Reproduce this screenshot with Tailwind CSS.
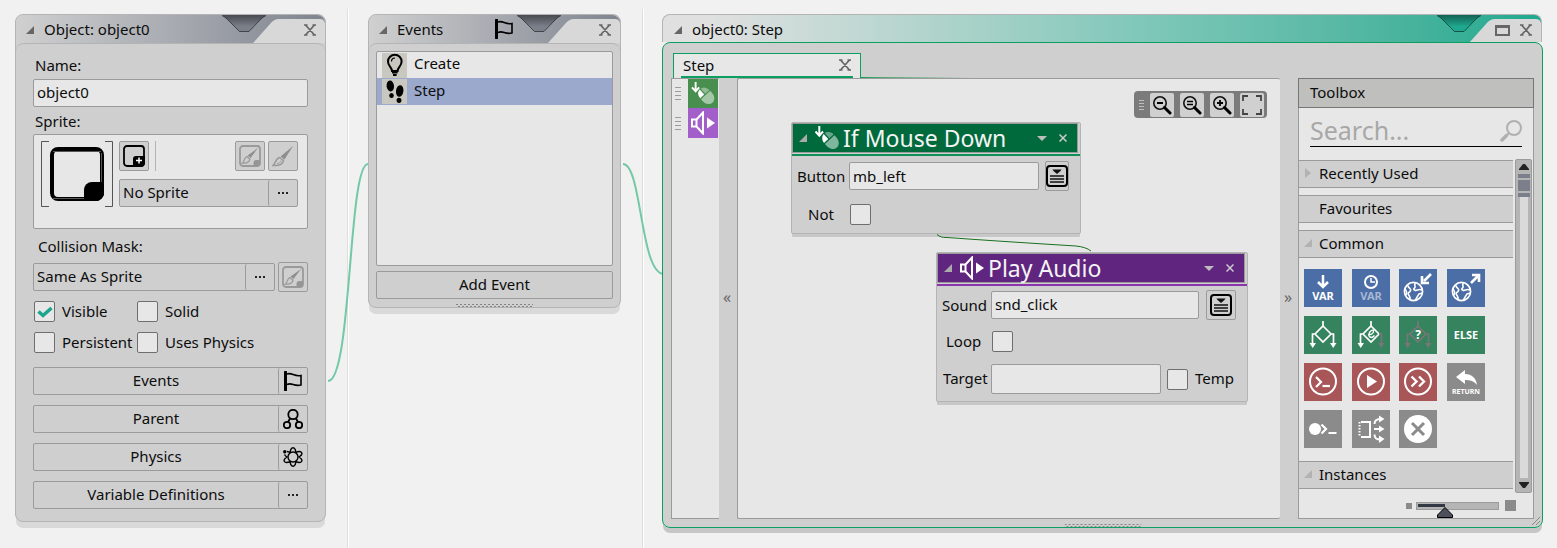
<!DOCTYPE html>
<html lang="en">
<head>
<meta charset="utf-8">
<title>Object editor</title>
<script src="https://cdn.jsdelivr.net/npm/@tailwindcss/browser@4"></script>
</head>
<body class="min-h-screen bg-[#f1f1f1] font-['Noto_Sans',sans-serif] text-[15px] leading-[22px] text-[#0c0c0c]">

<svg class="absolute size-0" aria-hidden="true">
  <defs>
    <linearGradient id="shade" x1="0" y1="0" x2="0" y2="1"><stop offset="0" stop-color="#000" stop-opacity=".42"/><stop offset=".7" stop-color="#000" stop-opacity="0"/></linearGradient>
    <pattern id="dots" width="4" height="4" patternUnits="userSpaceOnUse"><path d="M0 0h2v1H0zM2 2h2v1H2z" fill="#858585"/></pattern>
  </defs>
  <symbol id="flag" viewBox="0 0 20 20"><path d="M2.500 1v18" stroke="#000" stroke-width="3" stroke-linecap="round" fill="none"/><path d="M4 3c5-2 7 3 14 1.500v9.500c-7 2-9-3-14-.5" stroke="#000" stroke-width="1.600" fill="none"/></symbol>
  <symbol id="tri" viewBox="0 0 8 8"><path d="M8 0v8H0z" fill="currentColor"/></symbol>
  <symbol id="close" viewBox="0 0 12 12"><path d="M0 1h3.500M8.500 1H12M0 11h3.500M8.500 11H12M1.500 1l9 10M10.500 1l-9 10" stroke="currentColor" stroke-width="1.700" fill="none"/></symbol>
  <symbol id="more" viewBox="0 0 10 2"><path d="M0 0h2v2H0zM4 0h2v2H4zM8 0h2v2H8z" fill="#222"/></symbol>
  <symbol id="brush" viewBox="0 0 22 22"><path d="M21 1 12.500 14.500 8.500 11.500z" fill="#8f8f8f"/><path d="M7.500 12.500 11.500 15.500C10.500 20 6 21 1 20.500 3.500 19 3 14 7.500 12.500z" fill="none" stroke="#9a9a9a" stroke-width="1.500"/><path d="M5 18.500c2 0 3.500-1 4-3" stroke="#9a9a9a" fill="none"/></symbol>
  <symbol id="editsprite" viewBox="0 0 22 22"><rect x="1" y="1" width="20" height="20" rx="3" fill="none" stroke="#9a9a9a" stroke-width="1.800"/><path d="M14.500 21v-3a3 3 0 0 1 3-3H21v3.500L18.500 21z" fill="#959595"/><path d="M19 3 11.500 13 8.500 10.500z" fill="#8f8f8f"/><path d="M7.800 11.500 11 14.200C10 18 7 18.500 3.500 18 5.500 17 5 12.500 7.800 11.500z" fill="none" stroke="#9a9a9a" stroke-width="1.300"/></symbol>
  <symbol id="notch" viewBox="0 0 44 18"><path d="M0 0H44L40 3 27 16.500H17.500L4 3z" fill="currentColor"/><path d="M0 0H44L40 3 27 16.500H17.500L4 3z" fill="url(#shade)"/><path d="M0 .5 4 3 17.500 16.500H27L40 3 44 .5" fill="none" stroke="#000" stroke-opacity=".5"/></symbol>
  <symbol id="menu" viewBox="0 0 22 22"><rect x="1" y="1" width="20" height="20" rx="3" fill="none" stroke="#000" stroke-width="2"/><path d="M6.500 4.500h9l-1 1.500-3.500 3-3.500-3z" fill="#111"/><path d="M4 11h14M4 14h14M4 17h14" stroke="#111" stroke-width="1.600"/></symbol>
  <symbol id="mouse" viewBox="0 0 24 24"><path d="M4.300 0v9M.5 5.500l3.800 4.200L8 5.500" stroke="#fff" stroke-width="2" fill="none"/><g transform="rotate(-42 15.500 14.500)"><path d="M9 12a6.500 7.500 0 0 1 5.800-7v7z" fill="#fff"/><path d="M16.200 5a6.500 7.500 0 0 1 5.800 7h-5.800z" fill="#fff" fill-opacity=".4"/><path d="M9 13.300h13v3.200a6.500 7.500 0 0 1-13 0z" fill="#fff" fill-opacity=".5"/></g></symbol>
  <symbol id="audio" viewBox="0 0 24 24"><path d="M1 8.500h4.500v7H1zM5.500 8.500 12 1.500v21L5.500 15.500z" fill="none" stroke="#fff" stroke-width="2"/><path d="M16 6.500 24 12 16 17.500z" fill="#fff"/></symbol>
  <symbol id="lens" viewBox="0 0 20 20"><circle cx="8" cy="8" r="6.200" fill="none" stroke="#111" stroke-width="1.600"/><path d="M12.500 12.500 18 18" stroke="#000" stroke-width="3" stroke-linecap="round"/></symbol>
  <symbol id="globe" viewBox="0 0 22 22"><circle cx="11" cy="11" r="9.500" fill="none" stroke="#fff" stroke-width="1.800"/><path d="M5 4.500c0 3 4 3 3 5.500s-3 1-2.500 3.500 3 3 1.500 5.500M2 9c2 1 2 4 1 6M13 2c-2 2 1 4-1 5.500s1 3 3 2 3-1 5 0M20 13c-3 0-3 0-4.500 2.500S14 18 13 20" fill="none" stroke="#fff" stroke-width="1.700"/></symbol>
</svg>

<main class="relative flex min-h-screen min-w-[1200px] items-start pt-[14px] pr-[14px] pl-[15px]">

  <i class="absolute top-[9px] bottom-0 left-[347px] w-[2px] border-l border-[#dedede] bg-white"></i>
  <i class="absolute top-[9px] bottom-0 left-[642px] w-[2px] border-l border-[#dedede] bg-white"></i>
  <svg class="absolute top-0 left-[326px]" width="340" height="400" fill="none" stroke="#73c9a6" stroke-width="2" aria-hidden="true">
    <path d="M2 381C26 381 22 164 42 164"/>
    <path d="M297 164C316 164 314 274 338 274"/>
  </svg>

  <!-- Object window -->
  <section class="relative w-[311px] shrink-0 rounded-lg border border-[#b4b4b4] bg-[#cfcfcf] shadow-[0_7px_0_-1px_#d9d9d9]">
    <header class="relative flex h-7 items-center overflow-hidden rounded-t-lg bg-linear-to-r from-[#d0d0d0] via-[#a8abb1] to-[#7f848e] pl-2.5">
      <svg class="mt-0.5 size-2 text-[#666]"><use href="#tri"/></svg>
      <h1 class="ml-2.5">Object: object0</h1>
      <svg class="absolute top-0 right-[59px] h-[18px] w-11 text-[#7b7f89]"><use href="#notch"/></svg>
      <svg class="absolute right-0 bottom-0 h-6 w-[72px]"><path d="M0 24 17 5Q21 0 26 0H67Q71 0 72 4V24z" fill="#d8d8d8"/></svg>
      <button class="absolute top-[9px] right-[9px] text-[#666]" aria-label="Close"><svg class="size-3"><use href="#close"/></svg></button>
    </header>
    <div class="rounded-t-lg border-t border-[#b4b4b4] px-[17px] pt-2.5 pb-3">
      <label for="name" class="ml-0.5 block">Name:</label>
      <input id="name" value="object0" class="mt-[3px] block h-7 w-full rounded-xs border border-[#9b9b9b] bg-[#e7e7e7] px-[3px] pb-0.5">
      <div class="mt-[3px] ml-0.5">Sprite:</div>
      <div class="mt-0.5 flex h-[95px] gap-1.5 rounded-xs border border-[#9b9b9b] bg-[#e7e7e7] pt-1.5 pr-[9px] pl-[7px]">
        <svg class="h-[66px] w-[72px] shrink-0" viewBox="0 0 72 66" aria-label="Sprite preview"><path d="M8 .5H.5v65H8M64 .5h7.500v65H64" fill="none" stroke="#555"/><rect x="11" y="8" width="50" height="50" rx="6" fill="none" stroke="#000" stroke-width="4"/><path d="M12 10.500h48M60.500 12v30M12 57.500h32" stroke="#555"/><path d="M43 60V49a8 8 0 0 1 8-8H63v13l-6 6z" fill="#000"/></svg>
        <div class="flex min-w-0 flex-1 flex-col gap-2">
          <div class="flex gap-[3px]">
            <button aria-label="New sprite" class="grid size-[30px] place-items-center rounded-xs border border-[#9b9b9b] bg-[#cfcfcf]"><svg class="size-[22px]" viewBox="0 0 22 22"><rect x="1" y="1" width="20" height="20" rx="3" fill="none" stroke="#000" stroke-width="1.800"/><path d="M10 22v-8a3 3 0 0 1 3-3h9v8l-3 3z"/><path d="M16 12.500v6M13 15.500h6" stroke="#fff" stroke-width="1.500"/></svg></button>
            <i class="ml-[3px] w-px bg-[#b4b4b4]"></i>
            <button aria-label="Edit sprite" class="ml-auto grid size-[30px] place-items-center rounded-xs border border-[#9b9b9b] bg-[#cfcfcf]"><svg class="size-[22px]"><use href="#editsprite"/></svg></button>
            <button aria-label="Edit image" class="grid size-[30px] place-items-center rounded-xs border border-[#9b9b9b] bg-[#cfcfcf]"><svg class="size-[22px]"><use href="#brush"/></svg></button>
          </div>
          <div class="flex h-7 rounded-xs border border-[#9b9b9b] bg-[#cfcfcf]">
            <button class="flex-1 pb-0.5 pl-[3px] text-left">No Sprite</button>
            <button class="grid w-[29px] place-items-center rounded-l-xs border-l border-[#9b9b9b]" aria-label="Choose sprite"><svg class="h-0.5 w-2.5"><use href="#more"/></svg></button>
          </div>
        </div>
      </div>
      <div class="mt-1.5 ml-[5px]">Collision Mask:</div>
      <div class="mt-[5px] flex items-center gap-[3px]">
        <div class="flex h-7 flex-1 rounded-xs border border-[#9b9b9b]">
          <button class="flex-1 pb-0.5 pl-[3px] text-left">Same As Sprite</button>
          <button class="grid w-[29px] place-items-center rounded-l-xs border-l border-[#9b9b9b]" aria-label="Choose mask"><svg class="h-0.5 w-2.5"><use href="#more"/></svg></button>
        </div>
        <button aria-label="Edit mask" class="grid size-[30px] place-items-center rounded-xs border border-[#9b9b9b]"><svg class="size-[22px]"><use href="#editsprite"/></svg></button>
      </div>
      <div class="mt-[9px] grid grid-cols-[103px_1fr] gap-y-2.5 pl-px whitespace-nowrap">
        <label class="flex h-[21px] items-center gap-[7px]"><span class="relative size-[21px]"><input type="checkbox" checked class="block size-[21px] appearance-none rounded-xs border border-[#6f6f6f] bg-[#e7e7e7]"><svg class="absolute top-1 left-[3px] h-3.5 w-4" viewBox="0 0 16 14"><path d="M1.500 6.500 6 10.500 14.500 3" fill="none" stroke="#1aa58d" stroke-width="3.500"/></svg></span><span class="pb-0.5">Visible</span></label>
        <label class="flex h-[21px] items-center gap-[7px]"><input type="checkbox" class="size-[21px] appearance-none rounded-xs border border-[#6f6f6f] bg-[#e7e7e7]"><span class="pb-0.5">Solid</span></label>
        <label class="flex h-[21px] items-center gap-[7px]"><input type="checkbox" class="size-[21px] appearance-none rounded-xs border border-[#6f6f6f] bg-[#e7e7e7]"><span class="pb-0.5">Persistent</span></label>
        <label class="flex h-[21px] items-center gap-[7px]"><input type="checkbox" class="size-[21px] appearance-none rounded-xs border border-[#6f6f6f] bg-[#e7e7e7]"><span class="pb-0.5">Uses Physics</span></label>
      </div>
      <div class="mt-3.5 flex flex-col gap-2.5">
        <div class="flex h-7 rounded-xs border border-[#9b9b9b]"><button class="flex-1 pb-0.5">Events</button><button aria-label="Open events" class="grid w-[29px] place-items-center rounded-l-xs border-l border-[#9b9b9b]"><svg class="size-5"><use href="#flag"/></svg></button></div>
        <div class="flex h-7 rounded-xs border border-[#9b9b9b]"><button class="flex-1 pb-0.5">Parent</button><button aria-label="Open parent" class="grid w-[29px] place-items-center rounded-l-xs border-l border-[#9b9b9b]"><svg class="size-5" viewBox="0 0 20 20" fill="none" stroke="#000" stroke-width="1.800"><circle cx="10" cy="5.500" r="4.700"/><circle cx="4" cy="16" r="3.200"/><circle cx="16" cy="16" r="3.200"/><path d="M7 9.500 5 13M13 9.500 15 13"/></svg></button></div>
        <div class="flex h-7 rounded-xs border border-[#9b9b9b]"><button class="flex-1 pb-0.5">Physics</button><button aria-label="Open physics" class="grid w-[29px] place-items-center rounded-l-xs border-l border-[#9b9b9b]"><svg class="size-5" viewBox="0 0 20 20" fill="none" stroke="#000" stroke-width="1.400"><path d="M7.500 5.500C7 2.500 8.500 .8 10 .8s3 1.700 2.500 4.700M7.500 14.500c-.5 3 1 4.700 2.500 4.700s3-1.700 2.500-4.700M12.500 5.500c3-1.300 5.500-1.200 6.200.2s-.5 3-2.700 4.300c2.200 1.300 3.400 2.900 2.700 4.300s-3.200 1.500-6.200.2M7.500 14.500c-3 1.300-5.500 1.200-6.200-.2S1.800 11.300 4 10C2.800 9.300 2 8.500 1.500 7.500M7.500 5.500C6 5 5 4.500 4 4.500"/><circle cx="10" cy="10" r="5"/><circle cx="1.800" cy="4.800" r="1" fill="#000"/></svg></button></div>
        <div class="flex h-7 rounded-xs border border-[#9b9b9b]"><button class="flex-1 pb-0.5">Variable Definitions</button><button aria-label="Open variable definitions" class="grid w-[29px] place-items-center rounded-l-xs border-l border-[#9b9b9b]"><svg class="h-0.5 w-2.5"><use href="#more"/></svg></button></div>
      </div>
    </div>
  </section>

  <!-- Events window -->
  <section class="relative ml-[42px] w-[253px] shrink-0 rounded-lg border border-[#b4b4b4] bg-[#cfcfcf] shadow-[0_7px_0_-1px_#d9d9d9]">
    <header class="relative flex h-7 items-center overflow-hidden rounded-t-lg bg-linear-to-r from-[#d0d0d0] via-[#a8abb1] to-[#7f848e] pl-2.5">
      <svg class="mt-0.5 size-2 text-[#666]"><use href="#tri"/></svg>
      <h2 class="ml-2.5">Events</h2>
      <svg class="ml-[51px] size-5"><use href="#flag"/></svg>
      <svg class="absolute top-0 right-[59px] h-[18px] w-11 text-[#7b7f89]"><use href="#notch"/></svg>
      <svg class="absolute right-0 bottom-0 h-6 w-[72px]"><path d="M0 24 17 5Q21 0 26 0H67Q71 0 72 4V24z" fill="#d8d8d8"/></svg>
      <button class="absolute top-[9px] right-[9px] text-[#666]" aria-label="Close"><svg class="size-3"><use href="#close"/></svg></button>
    </header>
    <div class="rounded-t-lg border-t border-[#b4b4b4] px-[7px] pt-[7px] pb-1">
      <ul class="h-[215px] rounded-xs border border-[#9b9b9b] bg-[#e7e7e7]">
        <li class="flex h-[26px] items-center gap-[7px] pl-[5px]"><svg class="size-[25px] bg-[#c8c7c0]" viewBox="0 0 25 25" fill="none" stroke="#000"><path d="M10 18c0-4-4-4.500-4-9.500a6.800 6.800 0 0 1 13.600 0c0 5-4 5.500-4 9.500z" stroke-width="2"/><path d="M9.500 8.500c0-2.500 1.500-3.500 3.500-3.500" stroke-width="1.200"/><path d="M10 19.500h5.600M11 22h3.600" stroke-width="2"/></svg><span class="pb-1">Create</span></li>
        <li class="flex h-[27px] items-center gap-[7px] bg-[#9ba9cc] pl-[5px]"><svg class="size-[25px] bg-[#c8c7c0]" viewBox="0 0 25 25"><ellipse cx="8.300" cy="7" rx="3.700" ry="5.500" transform="rotate(-5 8.300 7)"/><ellipse cx="9.500" cy="16.500" rx="2.300" ry="2.500"/><ellipse cx="17.700" cy="12" rx="3.700" ry="5.800" transform="rotate(8 17.700 12)"/><ellipse cx="17" cy="21.300" rx="2.400" ry="2.600"/></svg><span class="pb-[3px]">Step</span></li>
      </ul>
      <button class="mt-[5px] h-7 w-full rounded-xs border border-[#9b9b9b] pb-0.5">Add Event</button>
      <svg class="mx-auto mt-[5px] -mb-1 block h-[3px] w-[77px]"><rect width="100%" height="100%" fill="url(#dots)"/></svg>
    </div>
  </section>

  <!-- Code window -->
  <section class="relative ml-[41px] min-w-0 flex-1 rounded-lg shadow-[0_6px_0_-1px_#c6c6c6]">
    <header class="relative mr-px flex h-7 items-center overflow-hidden rounded-t-lg border-x border-t border-[#b4b4b4] bg-linear-to-r from-[#e0e0e0] from-5% via-[#7ec7b9] via-55% to-[#1ba98f] pl-[11px]">
      <svg class="mt-[3px] size-2 text-[#666]"><use href="#tri"/></svg>
      <h2 class="mt-px ml-2.5">object0: Step</h2>
      <svg class="absolute top-0 right-[60px] h-[18px] w-11 text-[#1fa88f]"><use href="#notch"/></svg>
      <svg class="absolute right-0 bottom-0 h-[23px] w-[72px]"><path d="M0 24 17 5Q21 0 26 0H67Q71 0 72 4V24z" fill="#d8d8d8"/></svg>
      <button class="absolute top-[10px] right-[31px] h-[11px] w-[15px] border-2 border-t-3 border-[#666]" aria-label="Maximise"></button>
      <button class="absolute top-[9px] right-[9px] text-[#666]" aria-label="Close"><svg class="size-3"><use href="#close"/></svg></button>
    </header>
    <div class="relative rounded-lg border border-[#0d9f62] bg-[#cfcfcf] px-2 pt-2.5 pb-2">
      <div class="ml-0.5 flex h-[25px] w-[188px] items-center justify-between border border-b-0 border-[#0d9f62] bg-[#e7e7e7] pr-[9px] pb-[3px] pl-[9px]" role="tab">
        <span>Step</span>
        <button class="text-[#666]" aria-label="Close tab"><svg class="size-3"><use href="#close"/></svg></button>
      </div>
      <div class="-mt-0.5 flex h-0.5 items-end">
        <i class="ml-2.5 h-0.5 w-[172px] bg-[#0d9f62]"></i>
        <i class="ml-2 h-px w-[110px] bg-linear-to-r from-[#0d9f62] to-[#cfcfcf]"></i>
      </div>
      <div class="flex h-[441px]">
        <div class="w-12 shrink-0 border border-r-0 border-[#9b9b9b] bg-[#e7e7e7]">
          <div class="flex h-[29px] items-center"><span class="mr-[7px] ml-[3px] h-[13px] w-1.5 bg-[repeating-linear-gradient(#9b9b9b_0_1px,transparent_1px_4px)]"></span><svg class="h-full w-[30px] bg-[#488e4e] p-[3px]"><use href="#mouse"/></svg></div>
          <div class="flex h-[30px] items-center"><span class="mr-[7px] ml-[3px] h-[13px] w-1.5 bg-[repeating-linear-gradient(#9b9b9b_0_1px,transparent_1px_4px)]"></span><svg class="h-full w-[30px] bg-[#a35fc9] p-[3px]"><use href="#audio"/></svg></div>
        </div>
        <button class="w-[18px] shrink-0 pr-0.5 pb-1 text-base text-[#666]" aria-label="Collapse list">«</button>

        <!-- Node canvas -->
        <div class="relative min-w-0 flex-1 overflow-hidden rounded-xs border border-r-0 border-[#9b9b9b] bg-[#e7e7e7]">
          <div class="absolute top-3 right-[13px] flex h-[27px] items-center gap-[6px] rounded-sm bg-[#7b7b7b] pr-[3px] pl-[5px]">
            <span class="h-2.5 w-[5px] bg-[repeating-linear-gradient(#c0c0c0_0_1px,transparent_1px_3px)]"></span>
            <button aria-label="Zoom out" class="grid size-6 place-items-center rounded-xs bg-[#d0d0d0]"><svg class="size-5" viewBox="0 0 20 20"><use href="#lens"/><path d="M5 8h6" stroke="#000" stroke-width="1.800"/></svg></button>
            <button aria-label="Reset zoom" class="grid size-6 place-items-center rounded-xs bg-[#d0d0d0]"><svg class="size-5" viewBox="0 0 20 20"><use href="#lens"/><path d="M5 6.500h6M5 9.500h6" stroke="#000" stroke-width="1.500"/></svg></button>
            <button aria-label="Zoom in" class="grid size-6 place-items-center rounded-xs bg-[#d0d0d0]"><svg class="size-5" viewBox="0 0 20 20"><use href="#lens"/><path d="M5 8h6M8 5v6" stroke="#000" stroke-width="1.800"/></svg></button>
            <button aria-label="Fit to window" class="grid size-6 place-items-center rounded-xs bg-[#d0d0d0]"><svg class="size-5" viewBox="0 0 20 20"><path d="M1 6V1h5M14 1h5v5M19 14v5h-5M6 19H1v-5" fill="none" stroke="#444" stroke-width="1.800"/></svg></button>
          </div>

          <article class="absolute top-[43px] left-[53px] w-[290px] rounded-xs border border-[#b4b4b4] bg-[#cfcfcf] pb-2 shadow-[0_4px_0_-1px_#c8c8c8]">
            <header class="flex h-[30px] w-[286px] items-center border border-[#9b9b9b] bg-[#016a3c] pr-2.5 pl-1.5 text-[23px] text-[#f4f4f4]">
              <svg class="size-2 text-[#ababab]"><use href="#tri"/></svg>
              <svg class="ml-2 size-6"><use href="#mouse"/></svg>
              <h3 class="ml-1 flex-1">If Mouse Down</h3>
              <svg class="h-[5px] w-2.5" viewBox="0 0 10 5"><path d="M0 0h10L5 5z" fill="#bdbdbd"/></svg>
              <button aria-label="Remove" class="ml-3"><svg class="size-2" viewBox="0 0 8 8"><path d="M.5 .5l7 7M7.500 .5l-7 7" stroke="#ccc" stroke-width="1.500"/></svg></button>
            </header>
            <div class="mt-px h-0.5 bg-[#0f9058]"></div>
            <div class="mt-[5px] flex h-[30px] items-center pl-[5px]">
              <label for="mb" class="w-[52px]">Button</label>
              <input id="mb" value="mb_left" class="h-7 w-[190px] rounded-xs border border-[#9b9b9b] bg-[#e7e7e7] px-[3px]">
              <button aria-label="Options" class="ml-1.5 grid h-[30px] w-6 place-items-center rounded-xs border border-[#9b9b9b]"><svg class="size-[22px]"><use href="#menu"/></svg></button>
            </div>
            <div class="mt-[13px] flex h-[21px] items-center pl-4">
              <label for="not" class="w-[42px] pb-0.5">Not</label>
              <input id="not" type="checkbox" class="size-[21px] appearance-none rounded-xs border border-[#6f6f6f] bg-[#e7e7e7]">
            </div>
          </article>

          <article class="absolute top-[173px] left-[198px] w-[312px] rounded-xs border border-[#b4b4b4] bg-[#cfcfcf] pb-[7px] shadow-[0_4px_0_-1px_#c8c8c8]">
            <header class="flex h-[30px] w-[308px] items-center border border-[#9b9b9b] bg-[#60257f] pr-2.5 pl-1.5 text-[23px] text-[#f4f4f4]">
              <svg class="size-2 text-[#ababab]"><use href="#tri"/></svg>
              <svg class="ml-2 size-6"><use href="#audio"/></svg>
              <h3 class="ml-1 flex-1">Play Audio</h3>
              <svg class="h-[5px] w-2.5" viewBox="0 0 10 5"><path d="M0 0h10L5 5z" fill="#bdbdbd"/></svg>
              <button aria-label="Remove" class="ml-3"><svg class="size-2" viewBox="0 0 8 8"><path d="M.5 .5l7 7M7.500 .5l-7 7" stroke="#ccc" stroke-width="1.500"/></svg></button>
            </header>
            <div class="mt-px h-0.5 bg-[#8a35ad]"></div>
            <div class="mt-1 flex h-[30px] items-center pl-[5px]">
              <label for="snd" class="w-[49px]">Sound</label>
              <input id="snd" value="snd_click" class="h-7 w-[208px] rounded-xs border border-[#9b9b9b] bg-[#e7e7e7] px-[3px] pb-0.5">
              <button aria-label="Options" class="ml-[7px] grid size-[30px] place-items-center rounded-xs border border-[#9b9b9b]"><svg class="size-[22px]"><use href="#menu"/></svg></button>
            </div>
            <div class="mt-[11px] flex h-[21px] items-center pl-[9px]">
              <label for="loop" class="w-[46px] pb-0.5">Loop</label>
              <input id="loop" type="checkbox" class="size-[21px] appearance-none rounded-xs border border-[#6f6f6f] bg-[#e7e7e7]">
            </div>
            <div class="mt-3 flex h-[30px] items-center pl-1.5">
              <label for="target" class="w-12 pb-0.5">Target</label>
              <input id="target" class="h-[30px] w-[170px] rounded-xs border border-[#9b9b9b] bg-[#e7e7e7] px-[3px]">
              <input id="temp" type="checkbox" class="ml-1.5 size-[21px] appearance-none rounded-xs border border-[#6f6f6f] bg-[#e7e7e7]">
              <label for="temp" class="ml-[7px] pb-[3px]">Temp</label>
            </div>
          </article>

          <svg class="absolute top-[155px] left-[198px]" width="160" height="18" fill="none" stroke="#1a701f" aria-hidden="true"><path d="M1 .5C4 3 6 3.500 11 3.500L54 6.500 100 9.500 140 12Q150 13 155 17"/></svg>
        </div>

        <button class="w-[18px] shrink-0 pr-0.5 pb-1 text-base text-[#666]" aria-label="Collapse toolbox">»</button>

        <!-- Toolbox -->
        <aside class="flex w-[236px] shrink-0 flex-col border border-[#9b9b9b] bg-[#e7e7e7]">
          <h3 class="-mx-px -mt-px flex h-[30px] shrink-0 items-center border border-[#777] bg-[#bfbfbd] pb-0.5 pl-[11px]">Toolbox</h3>
          <div class="mx-[11px] mt-[7px] flex h-8 shrink-0 items-center border-b border-black">
            <input type="search" aria-label="Search" placeholder="Search..." class="h-8 min-w-0 flex-1 pb-0.5 text-[25px] outline-none placeholder:text-[#a8a8a8]">
            <svg class="size-[22px]" viewBox="0 0 22 22" fill="none" stroke="#b0b0b0"><circle cx="14" cy="8" r="7" stroke-width="2"/><path d="M9 13 6 16" stroke-width="2"/><path d="M6.500 15.500 2 20" stroke-width="3.500" stroke-linecap="round"/></svg>
          </div>
          <div class="mt-[12px] flex h-[334px] shrink-0">
            <div class="mt-px flex min-w-0 flex-1 flex-col gap-[7px] overflow-hidden">
              <button class="flex h-7 shrink-0 items-center border-y border-[#9b9b9b] bg-[#cfcfcf] pb-[3px] pl-1.5"><svg class="mr-2 h-2.5 w-1.5" viewBox="0 0 6 10"><path d="M0 0 6 5 0 10z" fill="#b2b2b2"/></svg>Recently Used</button>
              <button class="flex h-7 shrink-0 items-center border-y border-[#9b9b9b] bg-[#cfcfcf] pb-[3px] pl-5">Favourites</button>
              <button class="flex h-7 shrink-0 items-center border-y border-[#9b9b9b] bg-[#cfcfcf] pb-[3px] pl-[5px]"><svg class="mr-[7px] size-2 text-[#b2b2b2]"><use href="#tri"/></svg>Common</button>
              <div class="mt-1 mb-1.5 grid w-[186px] grid-cols-[repeat(4,38px)] justify-between gap-y-[9px] pl-[5px]">
                <button aria-label="Declare variable"><svg class="size-[38px] bg-[#4c6ea6]" viewBox="0 0 38 38"><path d="M19 6v11M14 13l5 5 5-5" stroke="#fff" stroke-width="2.500" fill="none"/><text x="19" y="31" text-anchor="middle" font-size="11" font-weight="700" fill="#fff">VAR</text></svg></button>
                <button aria-label="Temporary variable"><svg class="size-[38px] bg-[#4c6ea6]" viewBox="0 0 38 38"><circle cx="19" cy="13" r="6" fill="none" stroke="#fff" stroke-width="2"/><path d="M19 9v4h4" stroke="#fff" stroke-width="1.500" fill="none"/><text x="19" y="31" text-anchor="middle" font-size="11" font-weight="700" fill="#a7b8d5">VAR</text></svg></button>
                <button aria-label="Get global"><svg class="size-[38px] bg-[#4c6ea6]" viewBox="0 0 38 38"><use href="#globe" x="4" y="12" width="21" height="21"/><path d="M32 5 25 12M23 7v7h7" stroke="#fff" stroke-width="2.600" fill="none"/></svg></button>
                <button aria-label="Set global"><svg class="size-[38px] bg-[#4c6ea6]" viewBox="0 0 38 38"><use href="#globe" x="4" y="12" width="21" height="21"/><path d="M24 14 31 7M25 6h7v7" stroke="#fff" stroke-width="2.600" fill="none"/></svg></button>

                <button aria-label="If variable"><svg class="size-[38px] bg-[#36835f]" viewBox="0 0 38 38" fill="none" stroke="#fff" stroke-width="1.700"><path d="M19 5v5M19 10l8 8-8 8-8-8zM11 18H8.500v10M27 18h2.500v10"/><path d="M5.500 27h6.500l-3.300 5zM26 27h6.500l-3.300 5z" fill="#fff" stroke="none"/></svg></button>
                <button aria-label="If expression"><svg class="size-[38px] bg-[#36835f]" viewBox="0 0 38 38" fill="none" stroke="#fff" stroke-width="1.700"><path d="M19 5v5M19 10l8 8-8 8-8-8zM11 18H8.500v10"/><path d="M27 18h2.500v10" stroke="#777"/><path d="M5.500 27h6.500l-3.300 5z" fill="#fff" stroke="none"/><path d="M26 27h6.500l-3.300 5z" fill="#777" stroke="none"/><path d="M16 19c3 0 6-2 5.500-4s-4.500 0-4.500 3.500 3 4 5.500 1" stroke-width="1.300"/></svg></button>
                <button aria-label="If undefined"><svg class="size-[38px] bg-[#36835f]" viewBox="0 0 38 38" fill="none" stroke="#777" stroke-width="1.700"><path d="M19 5v5M19 10l8 8-8 8-8-8zM11 18H8.500v10M27 18h2.500v10"/><path d="M5.500 27h6.500l-3.300 5zM26 27h6.500l-3.300 5z" fill="#777" stroke="none"/><text x="19" y="22.500" text-anchor="middle" font-size="12" font-weight="700" fill="#fff" stroke="none">?</text></svg></button>
                <button aria-label="Else"><svg class="size-[38px] bg-[#36835f]" viewBox="0 0 38 38"><text x="19" y="23" text-anchor="middle" font-size="11" font-weight="700" fill="#fff">ELSE</text></svg></button>

                <button aria-label="Execute code"><svg class="size-[38px] bg-[#a85657]" viewBox="0 0 38 38" fill="none" stroke="#fff" stroke-width="2"><circle cx="19" cy="18.500" r="13"/><path d="M12 14l5 5-5 5" stroke-width="2.200"/><path d="M18.500 23h7.500" stroke-width="2.200"/></svg></button>
                <button aria-label="Call function"><svg class="size-[38px] bg-[#a85657]" viewBox="0 0 38 38"><circle cx="19" cy="18.500" r="13" fill="none" stroke="#fff" stroke-width="2"/><path d="M15 12 25 18.500 15 25z" fill="#fff"/></svg></button>
                <button aria-label="Execute script"><svg class="size-[38px] bg-[#a85657]" viewBox="0 0 38 38" fill="none" stroke="#fff" stroke-width="2"><circle cx="19" cy="18.500" r="13"/><path d="M12.500 13.500l5 5-5 5M20 13.500l5 5-5 5" stroke-width="2.400"/></svg></button>
                <button aria-label="Return"><svg class="size-[38px] bg-[#8b8b8b]" viewBox="0 0 38 38"><path d="M9 14 18 7v4c7 0 11 4 12 11-3-4-7-5-12-5v4z" fill="#fff"/><text x="19" y="30.500" text-anchor="middle" font-size="7" font-weight="700" fill="#fff">RETURN</text></svg></button>

                <button aria-label="Run script"><svg class="size-[38px] bg-[#8b8b8b]" viewBox="0 0 38 38" fill="none" stroke="#fff" stroke-width="2.200"><circle cx="11" cy="19" r="6" fill="#fff" stroke="none"/><path d="M17.500 14.500 22 19l-4.500 4.500M24.500 23h8"/></svg></button>
                <button aria-label="Apply to"><svg class="size-[38px] bg-[#8b8b8b]" viewBox="0 0 38 38" fill="none" stroke="#fff" stroke-width="2"><path d="M9 12h9v15H9" /><path d="M7.500 12v15" stroke-dasharray="1.500 1.500"/><path d="M22.500 14c0-4 2-5 6-5M22 19h6M22.500 24.500c0 4 2 5 6 5"/><path d="M27 5.500l5.500 3.500-5.500 3.500zM27 15.500l5.500 3.500-5.500 3.500zM27 25.500l5.500 3.500-5.500 4z" fill="#fff" stroke="none"/></svg></button>
                <button aria-label="Exit event"><svg class="size-[38px] bg-[#8b8b8b]" viewBox="0 0 38 38"><circle cx="19" cy="19" r="14" fill="#fff"/><path d="M13 13 25 25M25 13 13 25" stroke="#8b8b8b" stroke-width="3"/></svg></button>
              </div>
              <button class="flex h-7 shrink-0 items-center border-y border-[#9b9b9b] bg-[#cfcfcf] pb-0.5 pl-[5px]"><svg class="mr-[7px] size-2 text-[#b2b2b2]"><use href="#tri"/></svg>Instances</button>
            </div>
            <div class="mr-px ml-0.5 flex w-[17px] flex-col items-center rounded-xs border border-[#9b9b9b] bg-[#b5b5b5]">
              <svg class="my-1 h-1.5 w-2.5" viewBox="0 0 10 6"><path d="M4 0h2l4 5v1H0V5z" fill="#222"/></svg>
              <div class="flex w-3 flex-col gap-[2px]"><i class="h-1 bg-[#7b7f8c]"></i><i class="h-[11px] bg-[#7b7f8c]"></i><i class="h-1 bg-[#7b7f8c]"></i></div>
              <div class="w-2 flex-1 bg-[#dadada]"></div>
              <svg class="my-1 h-1.5 w-2.5" viewBox="0 0 10 6"><path d="M0 0h10v1L6 6H4L0 1z" fill="#222"/></svg>
            </div>
          </div>
          <div class="flex flex-1 items-center justify-end gap-1 pr-[17px]">
            <i class="size-1.5 bg-[#8b8b8b]"></i>
            <span class="relative h-2 w-[83px] border border-[#9b9b9b] bg-[#b5b5b5]">
              <i class="absolute top-px left-px h-[3px] w-[27px] bg-[#323944]"></i>
              <svg class="absolute top-1 left-5 h-[11px] w-4" viewBox="0 0 16 11"><path d="M8 .5 15.500 8v2.500H.5V8z" fill="#4d505c" stroke="#000"/></svg>
              <input type="range" aria-label="Icon size" value="34" class="absolute inset-0 w-full opacity-0">
            </span>
            <i class="ml-0.5 size-[11px] bg-[#8b8b8b]"></i>
          </div>
        </aside>
      </div>
      <svg class="absolute bottom-0 left-1/2 h-[3px] w-[77px] -translate-x-1/2"><rect width="100%" height="100%" fill="url(#dots)"/></svg>
      <svg class="absolute right-0.5 bottom-0.5 size-2" viewBox="0 0 8 8"><path d="M0 8 8 0M4 8 8 4" stroke="#888"/></svg>
    </div>
  </section>
</main>
</body>
</html>
